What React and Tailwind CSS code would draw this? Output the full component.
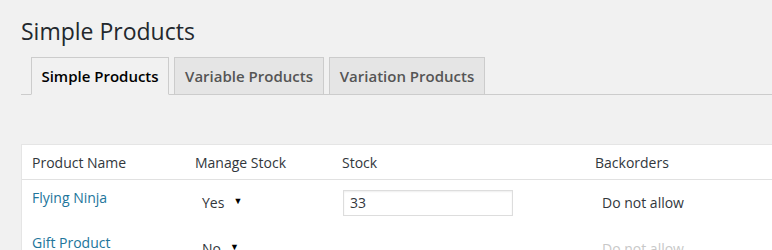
export default function App() {
  const font = { fontFamily: '"Open Sans", "Noto Sans", sans-serif' };
  return (
    <div className="w-[772px] h-[250px] overflow-hidden bg-[#f1f1f1]" style={font}>
      <div className="pl-[21px] pt-[15px]">
        <h1 className="text-[23px] leading-[32px] text-[#23282d] font-normal">Simple Products</h1>
        <div className="mt-[10px] flex items-end gap-[5px] pl-[10px] border-b border-[#cccccc] h-[38px]">
          <div className="w-[138px] h-[38px] -mb-px border border-[#cccccc] border-b-[#f1f1f1] bg-[#f1f1f1] text-[15px] font-semibold text-[#000] flex items-center justify-center">Simple Products</div>
          <div className="w-[150px] h-[37px] border border-[#cccccc] border-b-0 bg-[#e5e5e5] text-[15px] font-semibold text-[#555] flex items-center justify-center">Variable Products</div>
          <div className="w-[156px] h-[37px] border border-[#cccccc] border-b-0 bg-[#e5e5e5] text-[15px] font-semibold text-[#555] flex items-center justify-center">Variation Products</div>
        </div>
        <div className="mt-[49px] w-[900px] bg-white border border-[#e5e5e5]">
          <div className="flex h-[35px] items-center border-b border-[#e1e1e1] text-[14px] text-[#32373c]">
            <div className="w-[163px] pl-[10px]">Product Name</div>
            <div className="w-[147px] pl-[10px]">Manage Stock</div>
            <div className="w-[253px] pl-[10px]">Stock</div>
            <div className="pl-[10px]">Backorders</div>
          </div>
          <div className="flex h-[45px] text-[14px]">
            <div className="w-[163px] pl-[10px] pt-[7px] text-[#21759b]">Flying Ninja</div>
            <div className="w-[147px] pl-[17px] flex items-center gap-[9px] text-[#32373c]">
              <span>Yes</span>
              <span className="text-[9px] text-black -mt-[3px]">▼</span>
            </div>
            <div className="w-[253px] pl-[11px] flex items-center">
              <div className="w-[170px] h-[26px] border border-[#dddddd] px-[6px] flex items-center text-[#32373c] shadow-[inset_0_1px_2px_rgba(0,0,0,0.07)]">33</div>
            </div>
            <div className="pl-[17px] flex items-center text-[#32373c]">Do not allow</div>
          </div>
          <div className="flex h-[52px] text-[14px]">
            <div className="w-[163px] pl-[10px] pt-[7px] text-[#21759b]">Gift Product</div>
            <div className="w-[147px] pl-[17px] pt-[13px] flex items-start gap-[9px] text-[#32373c]">
              <span>No</span>
              <span className="text-[9px] text-black pt-[2px]">▼</span>
            </div>
            <div className="w-[253px]"></div>
            <div className="pl-[17px] pt-[13px] text-[#c8c8c8]">Do not allow</div>
          </div>
        </div>
      </div>
    </div>
  );
}
